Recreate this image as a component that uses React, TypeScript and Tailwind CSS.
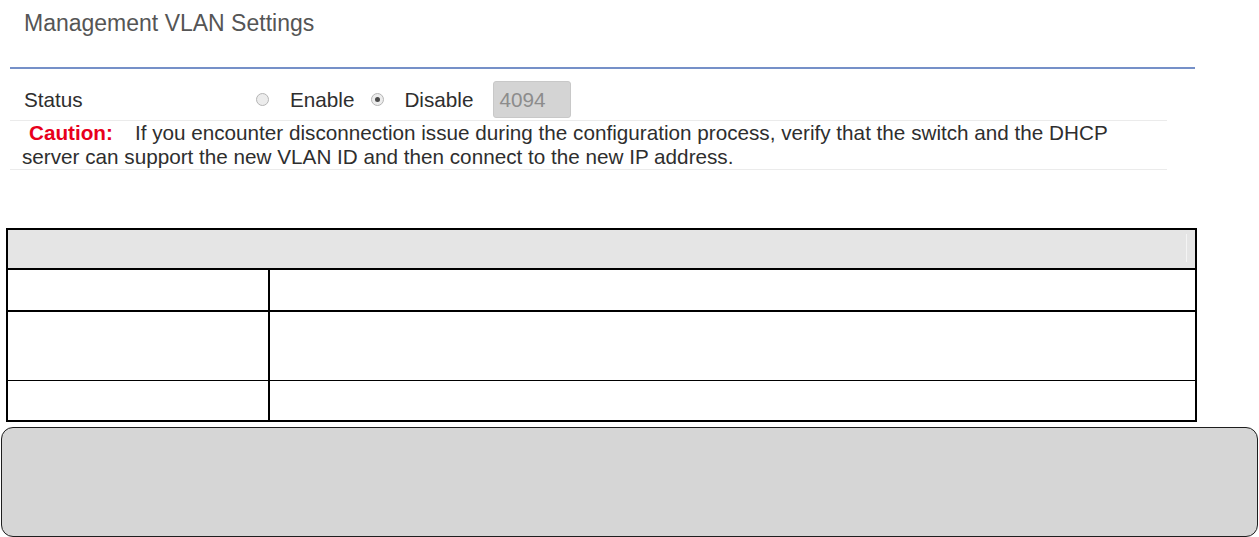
const Radio = ({ checked }: { checked?: boolean }) => (
  <span className="flex h-[13px] w-[13px] items-center justify-center rounded-full border border-[#b5b5b5] bg-[#ececec]">
    {checked && <span className="h-[5px] w-[5px] rounded-full bg-[#4a4a4a]" />}
  </span>
);

const App = () => {
  return (
    <div className="h-[537px] w-[1259px] overflow-hidden bg-white font-['Liberation_Sans',Arial,sans-serif] text-[#2e2e2e]">
      <h1 className="pl-[24px] pt-[10px] text-[23px] font-normal leading-[26px] text-[#555]">Management VLAN Settings</h1>
      <div className="ml-[10px] mt-[31px] h-[2px] w-[1185px] bg-[#7590c8]" />

      <div className="ml-[10px] w-[1157px]">
        <div className="flex items-center border-b border-[#ebebeb] pb-[2px] pl-[14px] pt-[12px] text-[20.7px]">
          <span className="w-[232px]">Status</span>
          <Radio />
          <span className="ml-[21px]">Enable</span>
          <span className="ml-[17px]">
            <Radio checked />
          </span>
          <span className="ml-[20px]">Disable</span>
          <div className="ml-[20px] flex h-[37px] w-[78px] items-center rounded-[3px] border border-[#c8c8c8] bg-[#d4d4d4] pl-[5px] text-[#8c8c8c]">
            4094
          </div>
        </div>
        <p className="border-b border-[#ebebeb] pl-[12px] text-[20.7px] leading-[24px]">
          <span className="ml-[7px] font-bold text-[#e8001c]">Caution:</span>
          <span className="ml-[22px]">If you encounter disconnection issue during the configuration process, verify that the switch and the DHCP</span>
          <br />
          server can support the new VLAN ID and then connect to the new IP address.
        </p>
      </div>

      <div className="ml-[6px] mt-[58px] w-[1191px] border-2 border-black">
        <div className="flex h-[40px] items-center justify-end border-b-2 border-black bg-[#e5e5e5] pb-[2px] pr-[8px]">
          <div className="h-[28px] w-px bg-[#f4f4f4]" />
        </div>
        <div className="flex h-[42px] border-b-2 border-black">
          <div className="w-[262px] border-r-2 border-black" />
          <div className="flex-1" />
        </div>
        <div className="flex h-[69px] border-b border-black">
          <div className="w-[262px] border-r-2 border-black" />
          <div className="flex-1" />
        </div>
        <div className="flex h-[39px]">
          <div className="w-[262px] border-r-2 border-black" />
          <div className="flex-1" />
        </div>
      </div>

      <div className="ml-px mt-[5px] h-[110px] w-[1257px] rounded-[12px] border-[1.5px] border-[#1e1e1e] bg-[#d6d6d6]" />
    </div>
  );
};

export default App;
